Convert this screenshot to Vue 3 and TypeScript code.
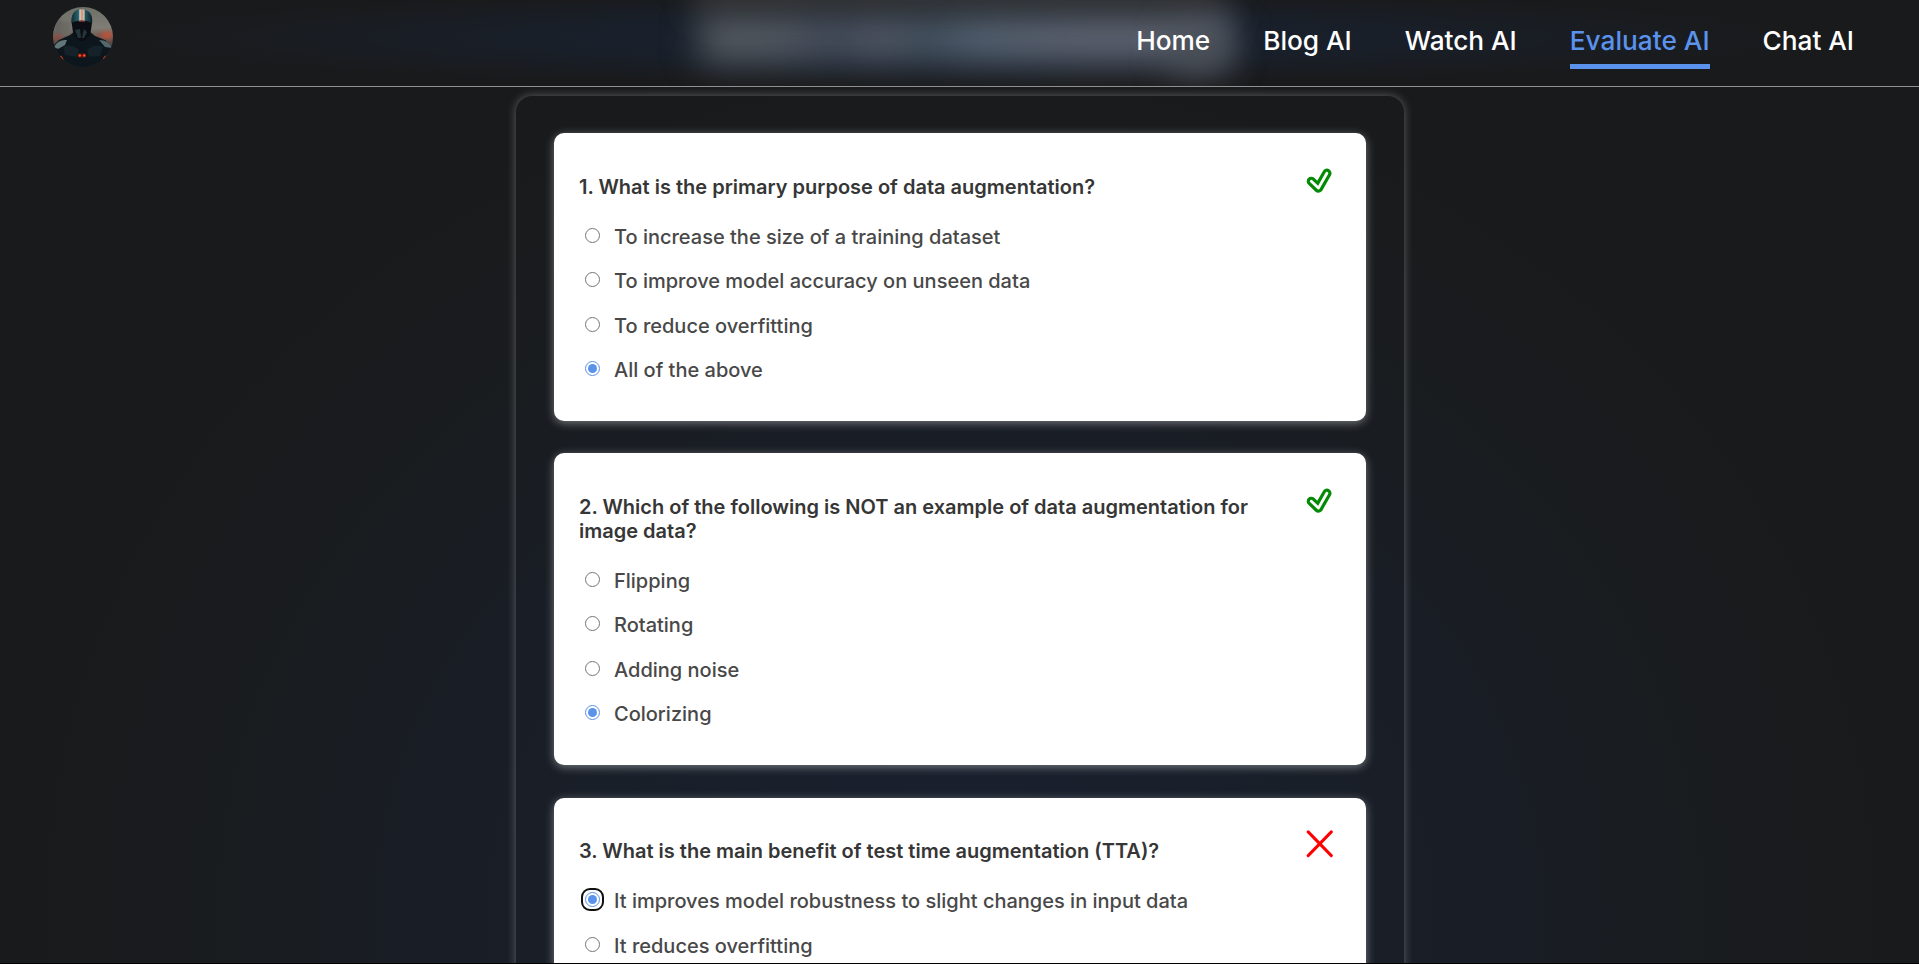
<script setup lang="ts">
interface Question {
  id: number
  text: string
  options: string[]
  selected: number
  correct: boolean
  focused?: boolean
}

const links: string[] = ['Home', 'Blog AI', 'Watch AI', 'Evaluate AI', 'Chat AI']
const activeLink = 'Evaluate AI'

const questions: Question[] = [
  {
    id: 1,
    text: 'What is the primary purpose of data augmentation?',
    options: [
      'To increase the size of a training dataset',
      'To improve model accuracy on unseen data',
      'To reduce overfitting',
      'All of the above',
    ],
    selected: 3,
    correct: true,
  },
  {
    id: 2,
    text: 'Which of the following is NOT an example of data augmentation for image data?',
    options: ['Flipping', 'Rotating', 'Adding noise', 'Colorizing'],
    selected: 3,
    correct: true,
  },
  {
    id: 3,
    text: 'What is the main benefit of test time augmentation (TTA)?',
    options: ['It improves model robustness to slight changes in input data', 'It reduces overfitting'],
    selected: 0,
    correct: false,
    focused: true,
  },
]
</script>

<template>
  <div class="page">
    <header class="header">
      <div class="glow"><i class="g1"></i><i class="g2"></i><i class="g3"></i></div>
      <svg class="avatar" viewBox="0 0 60 60" aria-hidden="true">
        <defs>
          <clipPath id="round"><circle cx="30" cy="30" r="30" /></clipPath>
          <linearGradient id="sky" x1="0" y1="0" x2="0" y2="1">
            <stop offset="0" stop-color="#6c7068" />
            <stop offset="0.35" stop-color="#807d75" />
            <stop offset="0.6" stop-color="#5a4842" />
            <stop offset="1" stop-color="#1b2528" />
          </linearGradient>
          <linearGradient id="helmet" x1="0" y1="0" x2="1" y2="0">
            <stop offset="0" stop-color="#12313a" />
            <stop offset="0.33" stop-color="#2a626d" />
            <stop offset="0.4" stop-color="#d0d4d0" />
            <stop offset="0.5" stop-color="#d98a62" />
            <stop offset="0.6" stop-color="#c5cbc7" />
            <stop offset="0.66" stop-color="#245560" />
            <stop offset="1" stop-color="#0c2028" />
          </linearGradient>
          <filter id="soft1"><feGaussianBlur stdDeviation="2.2" /></filter>
          <filter id="soft2"><feGaussianBlur stdDeviation="0.7" /></filter>
        </defs>
        <g clip-path="url(#round)">
          <rect width="60" height="60" fill="url(#sky)" />
          <g filter="url(#soft1)">
            <rect x="0" y="12" width="9" height="20" fill="#65645f" />
            <rect x="9" y="14" width="9" height="14" fill="#6c6b63" />
            <ellipse cx="4" cy="30" rx="6" ry="2.500" fill="#8f4a3b" />
            <ellipse cx="54" cy="28" rx="6" ry="3.500" fill="#c44f34" />
            <ellipse cx="46" cy="30" rx="4" ry="3" fill="#855044" />
          </g>
          <g filter="url(#soft2)">
            <path d="M17 28 L22 24 H36 L42 29 L52 33 L62 42 V62 H-2 V41 L6 33 Z" fill="#0c151b" />
            <path d="M1 40 Q5 32 14 33 L12 38 L5 42 Z" fill="#62777a" />
            <path d="M46 33 Q56 33 59 41 L52 40 Z" fill="#52686d" />
            <path d="M10 40 Q19 36 26 43 L24 50 L12 48 Z" fill="#15222b" />
            <path d="M34 43 Q41 36 50 40 L47 49 L36 50 Z" fill="#15222b" />
            <path d="M18.500 15 Q18 3 29 3 Q40 4 39 16 L37.500 26 Q34 34 28.500 34 Q21 32 20 25 Z" fill="#081116" />
            <path d="M18.700 15.500 Q18 2.200 29 2.200 Q40 3 39.200 16 Q29 11.500 18.700 15.500 Z" fill="url(#helmet)" />
            <path d="M22 23 L25 31 H28 L27 22 Z" fill="#23363a" />
            <path d="M31 22 L34 25 L31 31 H29 Z" fill="#23373a" />
            <path d="M25.500 14.300 H32" stroke="#b8432a" stroke-width="0.700" />
            <rect x="25" y="46.500" width="8" height="4" fill="#5c1610" />
          </g>
          <circle cx="26.800" cy="48.500" r="1.300" fill="#ff4a22" />
          <circle cx="31.200" cy="48.500" r="1.300" fill="#ff4a22" />
          <path d="M7.500 49 L10 53 M53 49 L50.500 52" stroke="#c23a20" stroke-width="1.800" />
        </g>
      </svg>
      <nav class="nav">
        <a v-for="l in links" :key="l" class="link" :class="{ active: l === activeLink }">{{ l }}</a>
      </nav>
    </header>

    <main class="panel">
      <section v-for="q in questions" :key="q.id" class="card">
        <div class="head">
          <h2 class="title">{{ q.id }}. {{ q.text }}</h2>
          <svg v-if="q.correct" class="mark" viewBox="0 0 28 28" aria-hidden="true">
            <path class="check-outer" d="M5.300 15.300 L12.400 22.100 L20.900 7.200" />
            <path class="check-inner" d="M5.300 15.300 L12.400 22.100 L20.900 7.200" />
          </svg>
          <svg v-else class="mark" viewBox="0 0 28 28" aria-hidden="true">
            <path class="cross" d="M2.200 1.900 L25.300 25.600 M25.300 1.900 L2.200 25.600" />
          </svg>
        </div>
        <label v-for="(o, i) in q.options" :key="o" class="option">
          <span class="dot" :class="{ ring: q.focused && i === q.selected }">
            <input type="radio" class="radio" :name="'question-' + q.id" :checked="i === q.selected" />
          </span>
          <span>{{ o }}</span>
        </label>
      </section>
    </main>
    <div class="edge"></div>
  </div>
</template>

<style>
body {
  margin: 0;
  background: #191a1b;
  overflow: hidden;
}
</style>

<style scoped>
.page {
  position: relative;
  height: 964px;
  overflow: hidden;
  box-sizing: border-box;
  font-family: Inter, sans-serif;
  background: radial-gradient(ellipse 960px 880px at 960px 920px, #1a2130 0%, #19202b 28%, #191d25 56%, #191c1f 78%, #191a1b 100%);
}
.header {
  position: relative;
  display: flex;
  align-items: flex-start;
  justify-content: space-between;
  height: 87px;
  box-sizing: border-box;
  padding: 7px 65px 0 53px;
  border-bottom: 1px solid #909193;
  overflow: hidden;
  background: radial-gradient(ellipse 860px 48px at 960px 38px, #192230 0%, #191f29 50%, #191a1b 100%);
}
.glow {
  position: absolute;
  left: 688px;
  top: -12px;
  width: 550px;
  height: 87px;
}
.glow i {
  position: absolute;
  display: block;
  filter: blur(17px);
}
.g1 {
  left: 12px;
  top: 23px;
  width: 530px;
  height: 52px;
  background: linear-gradient(90deg, #555a61 0%, #525861 16%, #424b5a 25%, #515765 34%, #42505e 43%, #536070 52%, #5e6471 72%, #5e6471 100%);
}
.g2 {
  left: 10px;
  top: -6px;
  width: 520px;
  height: 26px;
  background: #3a3b3c;
}
.g3 {
  left: 482px;
  top: 42px;
  width: 55px;
  height: 42px;
  background: #484d54;
}
.avatar {
  position: relative;
  width: 60px;
  height: 60px;
}
.nav {
  position: relative;
  display: flex;
  gap: 53px;
}
.link {
  height: 57px;
  padding-top: 17px;
  box-sizing: border-box;
  font-size: 26.250px;
  line-height: 33px;
  font-weight: 530;
  letter-spacing: -0.030px;
  color: #fff;
  white-space: nowrap;
}
.active {
  height: 62px;
  font-weight: 500;
  letter-spacing: 0;
  color: #5a92ec;
  border-bottom: 5px solid #5a92ec;
}
.panel {
  width: 888px;
  height: 1100px;
  box-sizing: border-box;
  margin: 9px auto 0 516px;
  padding: 37px 38px;
  border-radius: 16px;
  box-shadow: 0 0 10px rgba(255, 255, 255, 0.3);
}
.card {
  box-sizing: border-box;
  padding: 41.600px 32px 28.700px 25px;
  margin-bottom: 32px;
  border-radius: 10px;
  background: #fff;
  box-shadow: 0 2px 10px rgba(255, 255, 255, 0.4);
}
.card:nth-child(2) {
  margin-bottom: 32.500px;
}
.head {
  display: flex;
  justify-content: space-between;
  align-items: flex-start;
  margin-bottom: 15.700px;
}
.title {
  margin: 0;
  width: 690px;
  font-size: 20px;
  line-height: 24.200px;
  font-weight: 600;
  color: #363636;
}
.mark {
  flex: none;
  width: 28px;
  height: 28px;
  margin: -9px 0 -20px;
}
.check-outer,
.check-inner {
  fill: none;
  stroke-linecap: round;
  stroke-linejoin: round;
}
.check-outer {
  stroke: #048a04;
  stroke-width: 9.200;
}
.check-inner {
  stroke: #fff;
  stroke-width: 2.800;
}
.cross {
  fill: none;
  stroke: #f00;
  stroke-width: 3;
  stroke-linecap: round;
}
.option {
  display: flex;
  align-items: center;
  height: 44.450px;
  font-size: 20px;
  line-height: 24px;
  font-weight: 450;
  color: #484848;
}
.dot {
  display: flex;
  width: 15px;
  height: 15px;
  margin: -3px 14px 0 6px;
  border-radius: 5px;
}
.radio {
  width: 15px;
  height: 15px;
  margin: 0;
  accent-color: #5a92ec;
}
.ring {
  outline: 2px solid #101010;
  outline-offset: 2px;
}
.edge {
  position: absolute;
  left: 0;
  right: 0;
  bottom: 0;
  height: 1px;
  background: #000;
}
</style>
